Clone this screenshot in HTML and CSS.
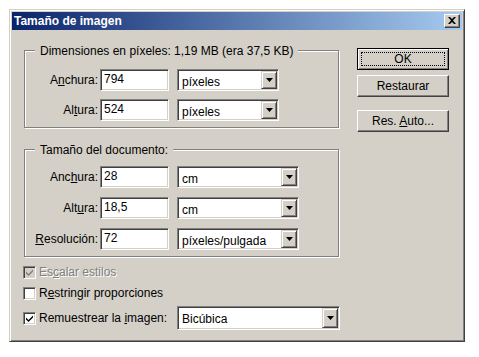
FILE: index.html
```html
<!DOCTYPE html>
<html lang="es">
<head>
    <meta charset="UTF-8">
    <title>Tamaño de imagen</title>
    <link rel="stylesheet" href="styles.css">
</head>
<body>

<div class="window">
    <div class="titlebar">
        <span class="title">Tamaño de imagen</span>
        <div class="close-btn">
            <svg width="8" height="7" viewBox="0 0 8 7"><path d="M0 0h2l2 2 2-2h2L5 3.5 8 7H6L4 5 2 7H0l3-3.5z" fill="#000"/></svg>
        </div>
    </div>

    <div class="client">
        <div class="main">
            <!-- Dimensiones en píxeles -->
            <div class="group group-pixels">
                <span class="legend">Dimensiones en píxeles: 1,19 MB (era 37,5 KB)</span>
                <div class="row">
                    <label class="row-label">A<u>n</u>chura:</label>
                    <div class="field">794</div>
                    <div class="select sel-short"><span>píxeles</span><div class="drop"><svg width="7" height="4"><path d="M0 0h7L3.5 4z" fill="#000"/></svg></div></div>
                </div>
                <div class="row">
                    <label class="row-label">Al<u>t</u>ura:</label>
                    <div class="field">524</div>
                    <div class="select sel-short"><span>píxeles</span><div class="drop"><svg width="7" height="4"><path d="M0 0h7L3.5 4z" fill="#000"/></svg></div></div>
                </div>
            </div>

            <!-- Tamaño del documento -->
            <div class="group group-doc">
                <span class="legend">Tamaño del documento:</span>
                <div class="row">
                    <label class="row-label">Anc<u>h</u>ura:</label>
                    <div class="field">28</div>
                    <div class="select sel-long"><span>cm</span><div class="drop"><svg width="7" height="4"><path d="M0 0h7L3.5 4z" fill="#000"/></svg></div></div>
                </div>
                <div class="row">
                    <label class="row-label">Alt<u>u</u>ra:</label>
                    <div class="field">18,5</div>
                    <div class="select sel-long"><span>cm</span><div class="drop"><svg width="7" height="4"><path d="M0 0h7L3.5 4z" fill="#000"/></svg></div></div>
                </div>
                <div class="row">
                    <label class="row-label"><u>R</u>esolución:</label>
                    <div class="field">72</div>
                    <div class="select sel-long"><span>píxeles/pulgada</span><div class="drop"><svg width="7" height="4"><path d="M0 0h7L3.5 4z" fill="#000"/></svg></div></div>
                </div>
            </div>

            <!-- Opciones -->
            <div class="check-row disabled">
                <div class="checkbox"><svg width="7" height="7"><path d="M0 2.5l2.5 2.5L7 0.5v2L2.5 7 0 4.5z" fill="#808080"/></svg></div>
                <span>Es<u>c</u>alar estilos</span>
            </div>
            <div class="check-row">
                <div class="checkbox"></div>
                <span>R<u>e</u>stringir proporciones</span>
            </div>
            <div class="check-row resample">
                <div class="checkbox"><svg width="7" height="7"><path d="M0 2.5l2.5 2.5L7 0.5v2L2.5 7 0 4.5z" fill="#000"/></svg></div>
                <span class="resample-label">Remuestrear la <u>i</u>magen:</span>
                <div class="select sel-wide"><span>Bicúbica</span><div class="drop"><svg width="7" height="4"><path d="M0 0h7L3.5 4z" fill="#000"/></svg></div></div>
            </div>
        </div>

        <div class="buttons">
            <div class="btn btn-default"><span>OK</span></div>
            <div class="btn"><span>Restaurar</span></div>
            <div class="btn btn-auto"><span>Res. <u>A</u>uto...</span></div>
        </div>
    </div>
</div>

</body>
</html>
```

FILE: styles.css
```css
body {
    margin: 0;
    background-color: #ffffff;
    font-family: "Liberation Sans", Arial, sans-serif;
    font-size: 12px;
    color: #000000;
}
.window {
    margin: 9px 0 0 9px;
    width: 456px;
    height: 333px;
    box-sizing: border-box;
    background-color: #d4d0c8;
    border: 1px solid;
    border-color: #d4d0c8 #404040 #404040 #d4d0c8;
    box-shadow: inset 1px 1px 0 #ffffff, inset -1px -1px 0 #808080;
    padding: 2px;
}
.titlebar {
    height: 18px;
    background: linear-gradient(to right, #0a246a, #a6caf0);
    display: flex;
    align-items: center;
    justify-content: space-between;
    padding: 0 2px 0 2px;
}
.title {
    color: #ffffff;
    font-weight: bold;
    font-size: 12px;
}
.close-btn {
    width: 16px;
    height: 14px;
    box-sizing: border-box;
    background-color: #d4d0c8;
    border: 1px solid;
    border-color: #ffffff #404040 #404040 #ffffff;
    box-shadow: inset -1px -1px 0 #808080;
    display: flex;
    align-items: center;
    justify-content: center;
}
.close-btn svg {
    display: block;
    margin-top: -1px;
}
.client {
    display: flex;
}
.main {
    padding: 20px 0 0 12px;
    width: 316px;
}
.group {
    position: relative;
    box-sizing: border-box;
    width: 315px;
    border: 1px solid #808080;
    box-shadow: inset 1px 1px 0 #ffffff, 1px 1px 0 #ffffff;
    display: flex;
    flex-direction: column;
}
.group-pixels {
    height: 78px;
    padding-top: 18px;
    gap: 8px;
}
.group-doc {
    margin-top: 21px;
    height: 108px;
    padding-top: 16px;
    gap: 9px;
}
.legend {
    position: absolute;
    top: -7px;
    left: 10px;
    padding: 0 5px 0 5px;
    background-color: #d4d0c8;
    line-height: 14px;
}
.row {
    display: flex;
    align-items: center;
    height: 22px;
}
.row-label {
    width: 73px;
    text-align: right;
    margin-right: 2px;
}
.field {
    width: 69px;
    height: 22px;
    box-sizing: border-box;
    background-color: #ffffff;
    border: 1px solid;
    border-color: #808080 #ffffff #ffffff #808080;
    box-shadow: inset 1px 1px 0 #404040, inset -1px -1px 0 #d4d0c8;
    padding: 2px 0 0 3px;
}
.select {
    height: 22px;
    box-sizing: border-box;
    background-color: #ffffff;
    border: 1px solid;
    border-color: #808080 #ffffff #ffffff #808080;
    box-shadow: inset 1px 1px 0 #404040, inset -1px -1px 0 #d4d0c8;
    padding: 1px;
    display: flex;
    margin-left: 8px;
}
.select span {
    flex: 1;
    padding: 4px 0 0 3px;
}
.sel-short {
    width: 102px;
}
.sel-long {
    width: 122px;
}
.sel-wide {
    width: 168px;
    height: 24px;
    margin-left: 0;
}
.drop {
    width: 16px;
    box-sizing: border-box;
    background-color: #d4d0c8;
    border: 1px solid;
    border-color: #d4d0c8 #404040 #404040 #d4d0c8;
    box-shadow: inset 1px 1px 0 #ffffff, inset -1px -1px 0 #808080;
    display: flex;
    align-items: center;
    justify-content: center;
}
.drop svg {
    display: block;
}
.check-row {
    display: flex;
    align-items: center;
    margin-left: -1px;
}
.check-row.disabled {
    margin-top: 8px;
    color: #808080;
    text-shadow: 1px 1px 0 #ffffff;
}
.check-row + .check-row {
    margin-top: 7px;
}
.check-row.resample {
    margin-top: 6px;
}
.checkbox {
    width: 13px;
    height: 13px;
    flex-shrink: 0;
    box-sizing: border-box;
    background-color: #ffffff;
    border: 1px solid;
    border-color: #808080 #ffffff #ffffff #808080;
    box-shadow: inset 1px 1px 0 #404040, inset -1px -1px 0 #d4d0c8;
    margin-right: 3px;
    display: flex;
    align-items: center;
    justify-content: center;
}
.checkbox svg {
    display: block;
}
.disabled .checkbox {
    background-color: #d4d0c8;
}
.resample-label {
    width: 138px;
    flex-shrink: 0;
}
.buttons {
    margin-left: auto;
    margin-right: 13px;
    padding-top: 18px;
    width: 92px;
    display: flex;
    flex-direction: column;
}
.btn {
    position: relative;
    height: 22px;
    box-sizing: border-box;
    background-color: #d4d0c8;
    border: 1px solid;
    border-color: #ffffff #404040 #404040 #ffffff;
    box-shadow: inset -1px -1px 0 #808080;
    display: flex;
    align-items: center;
    justify-content: center;
    margin-bottom: 5px;
}
.btn-default {
    border-color: #000000;
    box-shadow: inset 1px 1px 0 #ffffff, inset -1px -1px 0 #808080;
}
.btn-default::after {
    content: "";
    position: absolute;
    top: 3px;
    left: 3px;
    right: 3px;
    bottom: 3px;
    border: 1px dotted #000000;
}
.btn-auto {
    margin-top: 8px;
}
```
